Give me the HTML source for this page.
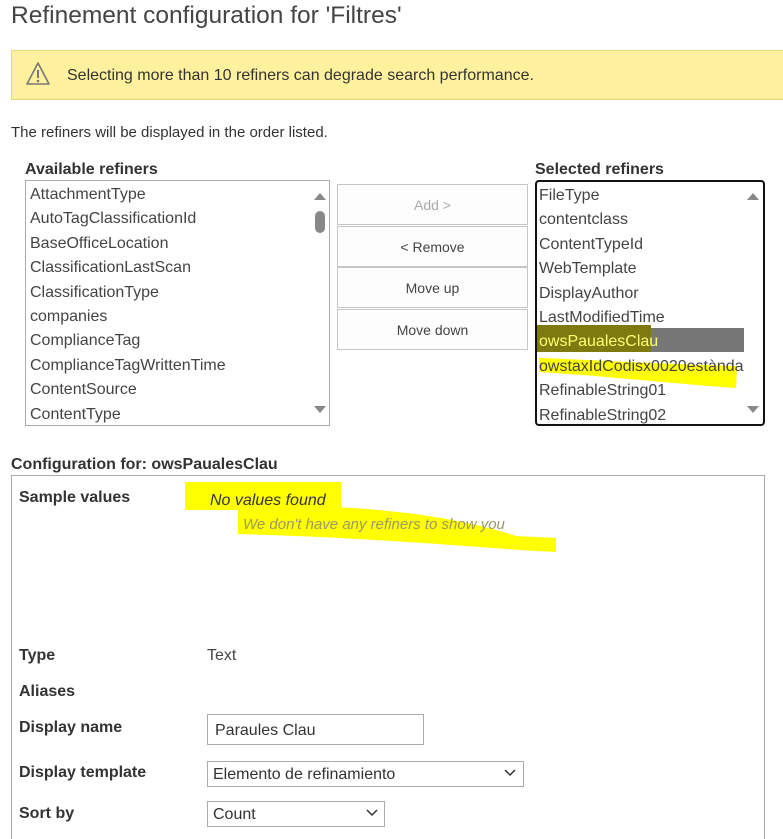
<!DOCTYPE html>
<html style="overflow:hidden;height:839px"><head><meta charset="utf-8"><style>
*{margin:0;padding:0;box-sizing:border-box}
body{width:783px;height:839px;overflow:hidden;background:#fff;font-family:"Liberation Sans",sans-serif;color:#333;position:relative}
.a{position:absolute;white-space:nowrap}
.li{position:absolute;left:4px;font-size:16px;color:#444;line-height:24.4px}
.btn{position:absolute;left:337px;width:191px;height:41px;border:1px solid #c6c6c6;background:#fdfdfd;font-size:14px;color:#444;text-align:center;line-height:40px}
.lbl{position:absolute;left:19px;font-size:16px;font-weight:bold;color:#333}
.arr{position:absolute;width:0;height:0;border-left:6px solid transparent;border-right:6px solid transparent}
</style></head><body>
<div class="a" style="left:11px;top:1px;font-size:24.5px;color:#444;line-height:30px">Refinement configuration for 'Filtres'</div>
<div class="a" style="left:11px;top:50px;width:790px;height:50px;background:#fff19e;border:1px solid #e3d97a"></div>
<svg class="a" style="left:25px;top:61px" width="26" height="26" viewBox="0 0 26 26"><path d="M13 2 L24 23 H2 Z" fill="none" stroke="#777" stroke-width="1.6" stroke-linejoin="round"/><path d="M13 9 V17" stroke="#777" stroke-width="2"/><circle cx="13" cy="20" r="1.3" fill="#777"/></svg>
<div class="a" style="left:67px;top:67px;font-size:16px;color:#333">Selecting more than 10 refiners can degrade search performance.</div>
<div class="a" style="left:11px;top:124px;font-size:15px;color:#333">The refiners will be displayed in the order listed.</div>
<div class="a" style="left:25px;top:161px;font-size:16px;font-weight:bold;color:#333">Available refiners</div>
<div class="a" style="left:535px;top:161px;font-size:16px;font-weight:bold;color:#333">Selected refiners</div>
<div class="a" style="left:25px;top:180px;width:305px;height:246px;border:1px solid #aaa;overflow:hidden">
<div class="li" style="top:2px">AttachmentType</div><div class="li" style="top:26.4px">AutoTagClassificationId</div><div class="li" style="top:50.8px">BaseOfficeLocation</div><div class="li" style="top:75.2px">ClassificationLastScan</div><div class="li" style="top:99.6px">ClassificationType</div><div class="li" style="top:124px">companies</div><div class="li" style="top:148.4px">ComplianceTag</div><div class="li" style="top:172.8px">ComplianceTagWrittenTime</div><div class="li" style="top:197.2px">ContentSource</div><div class="li" style="top:221.6px">ContentType</div>
<div class="arr" style="left:288px;top:12px;border-bottom:7px solid #888"></div>
<div class="a" style="left:289px;top:30px;width:10px;height:22px;border-radius:5px;background:#888"></div>
<div class="arr" style="left:288px;top:225px;border-top:7px solid #888"></div>
</div>
<div class="btn" style="top:184px;color:#aaa">Add &gt;</div>
<div class="btn" style="top:226px">&lt; Remove</div>
<div class="btn" style="top:267px">Move up</div>
<div class="btn" style="top:309px">Move down</div>
<div class="a" style="left:535px;top:180px;width:230px;height:246px;border:2px solid #111;border-radius:4px;overflow:hidden">
<div class="a" style="left:0;top:146px;width:207px;height:24px;background:#777"></div>
<div class="a" style="left:0;top:143px;width:114px;height:27px;background:#7d7a10"></div>
<svg class="a" style="left:0;top:174px" width="205" height="35"><path d="M2 2 C60 4 120 8 200 10 L199 32 C140 28 70 20 2 16 Z" fill="#ffff00"/></svg>
<div class="li" style="top:2px;left:2px">FileType</div><div class="li" style="top:26.4px;left:2px">contentclass</div><div class="li" style="top:50.8px;left:2px">ContentTypeId</div><div class="li" style="top:75.2px;left:2px">WebTemplate</div><div class="li" style="top:99.6px;left:2px">DisplayAuthor</div><div class="li" style="top:124px;left:2px">LastModifiedTime</div><div class="li" style="top:148.4px;left:2px;color:#ffff70">owsPaualesClau</div><div class="li" style="top:172.8px;left:2px;width:205px;overflow:hidden">owstaxIdCodisx0020estàndard</div><div class="li" style="top:197.2px;left:2px">RefinableString01</div><div class="li" style="top:221.6px;left:2px">RefinableString02</div>
<div class="arr" style="left:210px;top:11px;border-bottom:7px solid #888"></div>
<div class="arr" style="left:210px;top:224px;border-top:7px solid #888"></div>
</div>
<div class="a" style="left:11px;top:456px;font-size:16px;font-weight:bold;color:#333">Configuration for: owsPaualesClau</div>
<div class="a" style="left:11px;top:475px;width:754px;height:400px;border:1px solid #aaa"></div>
<div class="a" style="left:185px;top:482px;width:156px;height:28px;background:#ffff00"></div>
<svg class="a" style="left:236px;top:504px" width="325" height="50"><path d="M2 2 C100 0 200 6 280 32 L320 34 L320 48 C240 44 150 34 2 30 Z" fill="#ffff00"/></svg>
<div class="lbl" style="top:489px">Sample values</div>
<div class="a" style="left:210px;top:492px;font-size:16px;font-style:italic;color:#333">No values found</div>
<div class="a" style="left:243px;top:516px;font-size:15px;font-style:italic;color:#9a9a60">We don't have any refiners to show you</div>
<div class="lbl" style="top:647px">Type</div>
<div class="a" style="left:207px;top:647px;font-size:16px;color:#444">Text</div>
<div class="lbl" style="top:683px">Aliases</div>
<div class="lbl" style="top:719px">Display name</div>
<div class="a" style="left:207px;top:714px;width:217px;height:31px;border:1px solid #aaa;font-size:16px;color:#333;padding:7px 7px">Paraules Clau</div>
<div class="lbl" style="top:764px">Display template</div>
<div class="a" style="left:207px;top:761px;width:317px;height:26px;border:1px solid #aaa;font-size:16px;color:#333;padding:4px 5px">Elemento de refinamiento</div>
<svg class="a" style="left:504px;top:768px" width="12" height="10"><path d="M1 2 L6 7 L11 2" fill="none" stroke="#333" stroke-width="1.5"/></svg>
<div class="lbl" style="top:805px">Sort by</div>
<div class="a" style="left:207px;top:801px;width:178px;height:26px;border:1px solid #aaa;font-size:16px;color:#333;padding:4px 5px">Count</div>
<svg class="a" style="left:366px;top:808px" width="12" height="10"><path d="M1 2 L6 7 L11 2" fill="none" stroke="#333" stroke-width="1.5"/></svg>
</body></html>
